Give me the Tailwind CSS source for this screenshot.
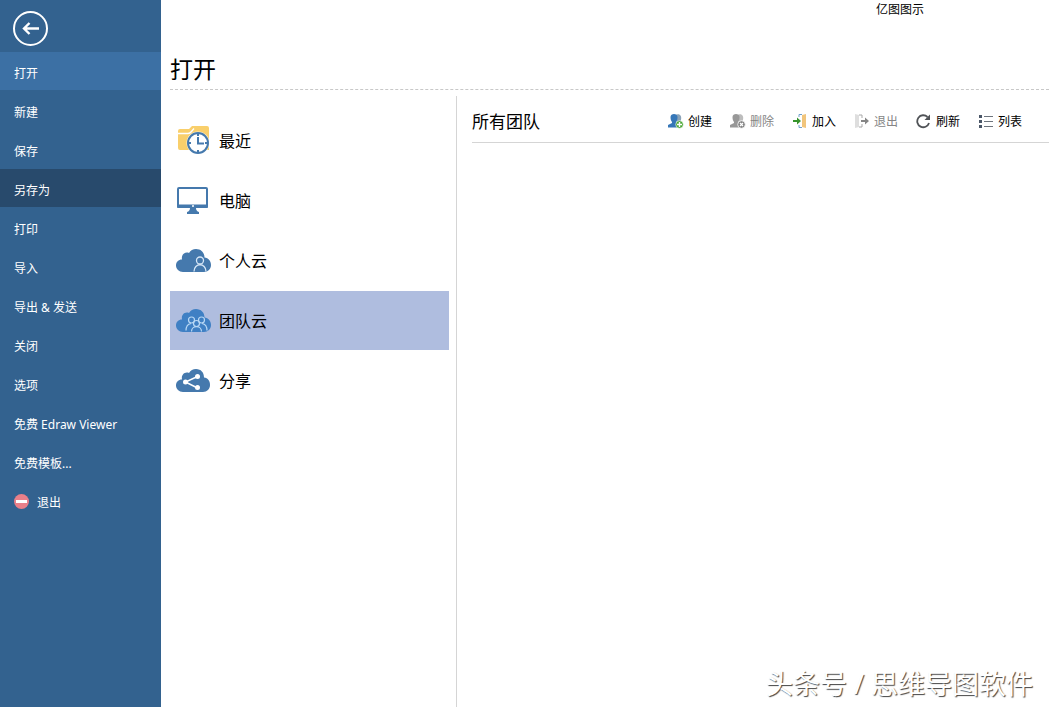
<!DOCTYPE html>
<html lang="zh-CN">
<head>
    <meta charset="UTF-8" />
    <meta name="viewport" content="width=device-width, initial-scale=1" />
    <title>亿图图示</title>
    <script src="https://cdn.jsdelivr.net/npm/@tailwindcss/browser@4"></script>
</head>
<body class="flex min-h-screen bg-white text-black font-['Noto_Sans','Noto_Sans_CJK_SC',sans-serif]">
    <!-- Sidebar -->
    <nav class="w-[161px] shrink-0 bg-[#33628f] text-xs text-white">
        <div class="h-[52px] pl-3 pt-[10px]">
            <button type="button" aria-label="返回" class="block">
                <svg class="size-9" viewBox="0 0 36 36" fill="none" stroke="#fff">
                    <circle cx="18.500" cy="18.500" r="16.500" stroke-width="2" />
                    <path d="M27 18.500H12M17.500 13l-5.500 5.500 5.500 5.500" stroke-width="2.400" />
                </svg>
            </button>
        </div>
        <ul class="flex flex-col gap-px">
            <li><a href="#" class="flex h-[38px] items-center bg-[#3c70a4] pl-[14px] pt-[6px]">打开</a></li>
            <li><a href="#" class="flex h-[38px] items-center pl-[14px] pt-[6px]">新建</a></li>
            <li><a href="#" class="flex h-[38px] items-center pl-[14px] pt-[6px]">保存</a></li>
            <li><a href="#" class="flex h-[38px] items-center bg-[#284a6c] pl-[14px] pt-[6px]">另存为</a></li>
            <li><a href="#" class="flex h-[38px] items-center pl-[14px] pt-[6px]">打印</a></li>
            <li><a href="#" class="flex h-[38px] items-center pl-[14px] pt-[6px]">导入</a></li>
            <li><a href="#" class="flex h-[38px] items-center pl-[14px] pt-[6px]">导出 &amp; 发送</a></li>
            <li><a href="#" class="flex h-[38px] items-center pl-[14px] pt-[6px]">关闭</a></li>
            <li><a href="#" class="flex h-[38px] items-center pl-[14px] pt-[6px]">选项</a></li>
            <li><a href="#" class="flex h-[38px] items-center pl-[14px] pt-[6px]">免费 Edraw Viewer</a></li>
            <li><a href="#" class="flex h-[38px] items-center pl-[14px] pt-[6px]">免费模板...</a></li>
            <li>
                <a href="#" class="flex h-[38px] items-center gap-2 pl-[14px] pt-[6px]">
                    <svg class="mb-1 size-[15px]" viewBox="0 0 15 15"><circle cx="7.500" cy="7.500" r="7.500" fill="#e97f89" /><path d="M2 6h11v3H2z" fill="#fff" /></svg>
                    退出
                </a>
            </li>
        </ul>
    </nav>

    <div class="flex min-w-0 grow flex-col pl-[9px]">
        <header>
            <p class="h-[52px] pr-[125px] pt-[2px] text-right text-xs">亿图图示</p>
            <h1 class="h-[38px] border-b border-dashed border-[#c8c8c8] text-[23px] leading-[34px]">打开</h1>
        </header>

        <div class="flex grow pt-[6px]">
            <!-- Places -->
            <ul class="flex w-[287px] shrink-0 flex-col gap-px border-r border-[#d5d5d5] pr-[7px] pt-[15px] text-base">
                <li>
                    <a href="#" class="flex h-[59px] items-center gap-2 pl-[6px]">
                        <svg class="h-8 w-[35px]" viewBox="0 1 35 32" fill="none">
                            <path d="M2 7q0-2 2-2h9l3-3h15q2 0 2 2v22H4q-2 0-2-2z" fill="#f9cf6b" />
                            <path d="M2 9.500h10q2 0 3.500-2l2.500-3" stroke="#fff" stroke-width="1.300" />
                            <circle cx="22" cy="19" r="11.500" fill="#fff" fill-opacity=".7" />
                            <circle cx="22" cy="19" r="10" fill="#fff" stroke="#4579ad" stroke-width="2" />
                            <path d="M22 13v6.500h6M22 9v3M22 26v3M12 19h3M29 19h3" stroke="#4579ad" stroke-width="2" />
                        </svg>
                        最近
                    </a>
                </li>
                <li>
                    <a href="#" class="flex h-[59px] items-center gap-2 pl-[6px]">
                        <svg class="h-8 w-[35px]" viewBox="0 1 35 32" fill="none">
                            <rect x="2" y="4" width="29" height="19" rx="1" stroke="#4579ad" stroke-width="2" />
                            <path d="M1 20.500h31V23q0 1-1 1H2q-1 0-1-1zM14 24h6q0 3 3 4v2H11v-2q3-1 3-4z" fill="#4579ad" />
                            <circle cx="17" cy="22" r="1" fill="#fff" />
                        </svg>
                        电脑
                    </a>
                </li>
                <li>
                    <a href="#" class="flex h-[59px] items-center gap-2 pl-[6px]">
                        <svg class="h-8 w-[35px]" viewBox="0 0 35 32" fill="none">
                            <path d="M7 27C3 27 0 24 0 20.500 0 17 2.500 14.500 6 14.500 5 9.500 9 6.500 13 8c1.500-2.500 4-4 7-4 5 0 8.500 3.500 8.500 8.500 4 .5 6.500 3.500 6.500 7.500s-3 7-7 7z" fill="#4579ad" />
                            <g stroke="#d7e7f7" stroke-width="1.300"><circle cx="24" cy="15.500" r="3.500" /><path d="M18 26.500c0-9 12-9 12 0" /></g>
                        </svg>
                        个人云
                    </a>
                </li>
                <li>
                    <a href="#" class="flex h-[59px] items-center gap-2 bg-[#afbddf] pl-[6px]">
                        <svg class="h-8 w-[35px]" viewBox="0 0 35 32" fill="none">
                            <path d="M7 27C3 27 0 24 0 20.500 0 17 2.500 14.500 6 14.500 5 9.500 9 6.500 13 8c1.500-2.500 4-4 7-4 5 0 8.500 3.500 8.500 8.500 4 .5 6.500 3.500 6.500 7.500s-3 7-7 7z" fill="#3f80c4" />
                            <g stroke="#b9d8f5" stroke-width="1.200">
                                <circle cx="15.500" cy="15" r="3" /><circle cx="25.500" cy="15" r="3" /><circle cx="20.500" cy="18.500" r="3" />
                                <path d="M10 25.500c0-4 2-6.500 5-7M31 25.500c0-4-2-6.500-5-7M15.500 26.500c0-6.500 10-6.500 10 0" />
                            </g>
                        </svg>
                        团队云
                    </a>
                </li>
                <li>
                    <a href="#" class="flex h-[59px] items-center gap-2 pl-[6px]">
                        <svg class="h-8 w-[35px]" viewBox="0 0 35 32" fill="none">
                            <path d="M7 27C3 27 0 24 0 20.500 0 17 2.500 14.500 6 14.500 5 9.500 9 6.500 13 8c1.500-2.500 4-4 7-4 5 0 8 3.500 8 8.500 4 .5 6 3.500 6 7.500s-3 7-7 7z" fill="#4579ad" />
                            <path d="M21.500 11.500L9.500 17l12 6" stroke="#fff" stroke-width="1.500" />
                            <g fill="#fff"><circle cx="21.500" cy="11.500" r="2.500" /><circle cx="9.500" cy="17" r="2.500" /><circle cx="21.500" cy="22.500" r="2.500" /></g>
                        </svg>
                        分享
                    </a>
                </li>
            </ul>

            <!-- Teams -->
            <main class="flex min-w-0 grow flex-col pl-[15px]">
                <div class="flex h-[47px] items-center justify-between border-b border-[#d5d5d5] pr-[27px] pt-[6px]">
                    <h2 class="text-[17px]">所有团队</h2>
                    <div class="flex gap-[18px] text-xs">
                        <button type="button" class="flex items-center gap-1">
                            <svg class="mb-[2px] size-4" viewBox="0 0 16 16">
                                <path d="M7 2c5-2 7 1 6 5l-1 2 3 2v2H9z" fill="#8ba3b8" />
                                <path d="M2.500 4c0-4 7-4 7 0 0 2-.5 4-1.500 5v1l4 2v2.500H0V12l4-2V9c-1-1-1.500-3-1.500-5z" fill="#3677b8" />
                                <circle cx="11.500" cy="11.500" r="3.800" fill="#4ca735" stroke="#fff" stroke-width=".6" /><path d="M9 11.500h5M11.500 9v5" stroke="#fff" stroke-width="1.400" />
                            </svg>
                            创建
                        </button>
                        <button type="button" class="flex items-center gap-1 text-[#858585]">
                            <svg class="mb-[2px] size-4" viewBox="0 0 16 16">
                                <path d="M7 2c5-2 7 1 6 5l-1 2 3 2v2H9z" fill="#bdbdbd" />
                                <path d="M2.500 4c0-4 7-4 7 0 0 2-.5 4-1.500 5v1l4 2v2.500H0V12l4-2V9c-1-1-1.500-3-1.500-5z" fill="#989898" />
                                <circle cx="11.500" cy="11.500" r="3.800" fill="#858585" stroke="#fff" stroke-width=".8" /><path d="M10 10l3 3M13 10l-3 3" stroke="#fff" stroke-width="1.200" />
                            </svg>
                            删除
                        </button>
                        <button type="button" class="flex items-center gap-1">
                            <svg class="mb-[2px] size-4" viewBox="0 0 16 16" fill="none">
                                <path d="M10 2l4-1v14l-4-1z" fill="#f1c57c" />
                                <path d="M7 4V1.500h3M7 12v2.500h3" stroke="#6fa0cb" />
                                <path d="M1 7h4V4.500L9 8l-4 3.500V9H1z" fill="#36942b" />
                            </svg>
                            加入
                        </button>
                        <button type="button" class="flex items-center gap-1 text-[#858585]">
                            <svg class="mb-[2px] size-4" viewBox="0 0 16 16" fill="none">
                                <path d="M1 1l4 1v12l-4 1z" fill="#dedede" />
                                <path d="M5 2h3v3M5 14h3v-3" stroke="#aaa" />
                                <path d="M7 7h4V4.500L15 8l-4 3.500V9H7z" fill="#858585" />
                            </svg>
                            退出
                        </button>
                        <button type="button" class="flex items-center gap-1">
                            <svg class="mb-[2px] size-4" viewBox="0 0 16 16" fill="none">
                                <path d="M11.500 4A6 6 0 1 0 13 10" stroke="#505357" stroke-width="1.800" />
                                <path d="M14 1.500V7H8.500z" fill="#505357" />
                            </svg>
                            刷新
                        </button>
                        <button type="button" class="flex items-center gap-1">
                            <svg class="mb-[2px] size-4" viewBox="0 0 16 16" fill="none">
                                <path d="M1 2h3v3H1zM1 7h3v3H1zM1 12h3v3H1z" fill="#4b5768" />
                                <path d="M6 3.500h9M6 8.500h9M6 13.500h9" stroke="#6d747d" />
                            </svg>
                            列表
                        </button>
                    </div>
                </div>
                <p class="mt-auto pb-1 pr-4 text-right text-[27px] leading-[38px] text-white [text-shadow:1px_1px_1px_#444]">头条号 / 思维导图软件</p>
            </main>
        </div>
    </div>
</body>
</html>
